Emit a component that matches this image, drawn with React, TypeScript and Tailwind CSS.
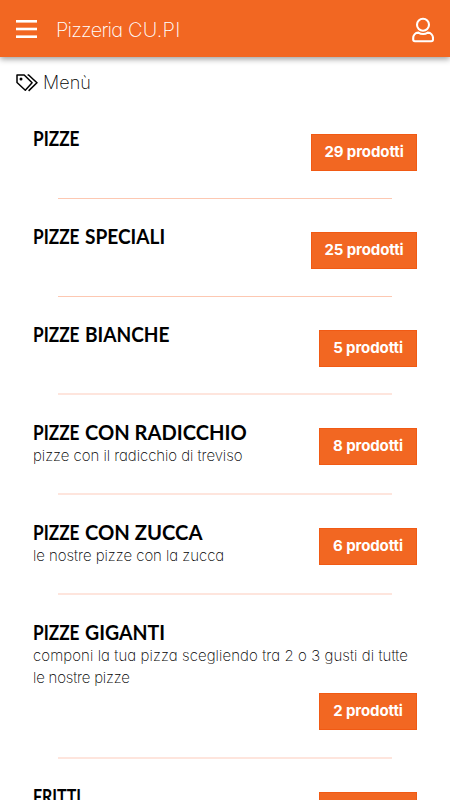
type Item = {
  first: string;
  firstScale: string;
  rest?: string;
  restScale?: string;
  lines: { text: string; spacing: string }[];
  count: number;
  height: string;
  below?: boolean;
  rule: string;
};

const thin = "h-px bg-[#fdc8b2]";
const soft = "h-0.5 bg-[#fee5dd]";

const items: Item[] = [
  { first: "PIZZE", firstScale: "scale-x-[0.86]", lines: [], count: 29, height: "h-[71px]", rule: thin },
  { first: "PIZZE", firstScale: "scale-x-[0.86]", rest: "SPECIALI", restScale: "scale-x-[0.955]", lines: [], count: 25, height: "h-[71px]", rule: thin },
  { first: "PIZZE", firstScale: "scale-x-[0.86]", rest: "BIANCHE", restScale: "scale-x-[0.955]", lines: [], count: 5, height: "h-[70px]", rule: soft },
  {
    first: "PIZZE", firstScale: "scale-x-[0.86]", rest: "CON RADICCHIO", restScale: "scale-x-[1.005]",
    lines: [{ text: "pizze con il radicchio di treviso", spacing: "tracking-[-0.05px]" }],
    count: 8, height: "h-[72px]", rule: soft,
  },
  {
    first: "PIZZE", firstScale: "scale-x-[0.86]", rest: "CON ZUCCA", restScale: "scale-x-[1.01]",
    lines: [{ text: "le nostre pizze con la zucca", spacing: "tracking-[-0.05px]" }],
    count: 6, height: "h-[72px]", rule: soft,
  },
  {
    first: "PIZZE", firstScale: "scale-x-[0.86]", rest: "GIGANTI", restScale: "scale-x-[0.975]",
    lines: [
      { text: "componi la tua pizza scegliendo tra 2 o 3 gusti di tutte", spacing: "tracking-[0.07px]" },
      { text: "le nostre pizze", spacing: "tracking-[-0.2px]" },
    ],
    count: 2, height: "h-[136px]", below: true, rule: soft,
  },
  { first: "FRITTI", firstScale: "scale-x-[0.8]", lines: [], count: 9, height: "h-[70px]", rule: thin },
];

function Category({ item }: { item: Item }) {
  return (
    <section>
      <div className={`mt-[26px] flex justify-between px-[33px] ${item.below ? "flex-col" : ""} ${item.height}`}>
        <div>
          <h2 className="flex h-6 font-['Lato','Inter',sans-serif] text-[20px] leading-[22px] font-bold whitespace-nowrap">
            <span className={`w-[51.5px] origin-left ${item.firstScale}`}>{item.first}</span>
            {item.rest && <span className={`origin-left ${item.restScale}`}>{item.rest}</span>}
          </h2>
          {item.lines.map((line) => (
            <p key={line.text} className={`h-[22px] text-[15px] leading-[22px] font-[250] whitespace-nowrap ${line.spacing}`}>
              {line.text}
            </p>
          ))}
        </div>
        <button
          className={`h-[37px] shrink-0 self-end border border-[#f15a14] bg-[#f26722] text-[15px] font-bold tracking-[-0.1px] text-white ${
            item.count > 9 ? "w-[106px]" : "w-[98px]"
          } ${item.below ? "mb-[27px]" : "mt-[7px] self-start"}`}
        >
          {item.count} prodotti
        </button>
      </div>
      <div className={`mr-[58px] ml-[58px] ${item.rule}`} />
    </section>
  );
}

export default function App() {
  return (
    <div className="h-[800px] w-[450px] overflow-hidden bg-white font-['Inter','Liberation_Sans',sans-serif] text-black [font-feature-settings:'cv11','ss03']">
      <header className="flex h-[57px] items-center bg-[#f26722] pr-4 pl-4 text-white shadow-[0_2px_6px_rgba(0,0,0,0.4)]">
        <svg width="21" height="18" viewBox="0 0 21 18" fill="currentColor" className="mt-px">
          <rect width="21" height="2.6" />
          <rect y="7.7" width="21" height="2.6" />
          <rect y="15.4" width="21" height="2.6" />
        </svg>
        <h1 className="ml-[19px] pt-[3px] text-[20px] leading-7 font-[250]">
          <span className="tracking-[-0.8px]">Pizzeria </span>
          <span className="ml-px tracking-[0.2px]">CU.PI</span>
        </h1>
        <svg width="22" height="26" viewBox="0 0 22 26" fill="none" stroke="currentColor" strokeWidth="2.1" className="mt-0.5 ml-auto">
          <circle cx="11" cy="7.8" r="6" />
          <path d="M6.3 15.6C3.2 15.8 1.2 18.3 1.2 21v1.5c0 1 .7 1.7 1.7 1.7h16.4c1 0 1.7-.7 1.7-1.7V21c0-2.7-2.1-5.2-5.2-5.4-1.4.9-3 1.4-4.7 1.4s-3.4-.5-4.8-1.4z" />
        </svg>
      </header>
      <div className="flex h-[44px] items-center pt-[7px] pl-4">
        <svg width="22" height="18" viewBox="0 0 22 18" fill="none" stroke="currentColor" strokeWidth="1.5">
          <path d="M1 1h7.2l7.9 7.8-6.8 7.4L1 8.5z" strokeLinejoin="round" />
          <path d="M11.6 1h1l8.3 7.8-8.3 8.1" />
          <circle cx="5" cy="5" r="1.5" fill="currentColor" stroke="none" />
        </svg>
        <span className="ml-[5px] pt-px text-[18px] leading-6 font-[250] tracking-[0.1px]">Menù</span>
      </div>
      <main>
        {items.map((item) => (
          <Category key={item.first + (item.rest ?? "")} item={item} />
        ))}
      </main>
    </div>
  );
}
